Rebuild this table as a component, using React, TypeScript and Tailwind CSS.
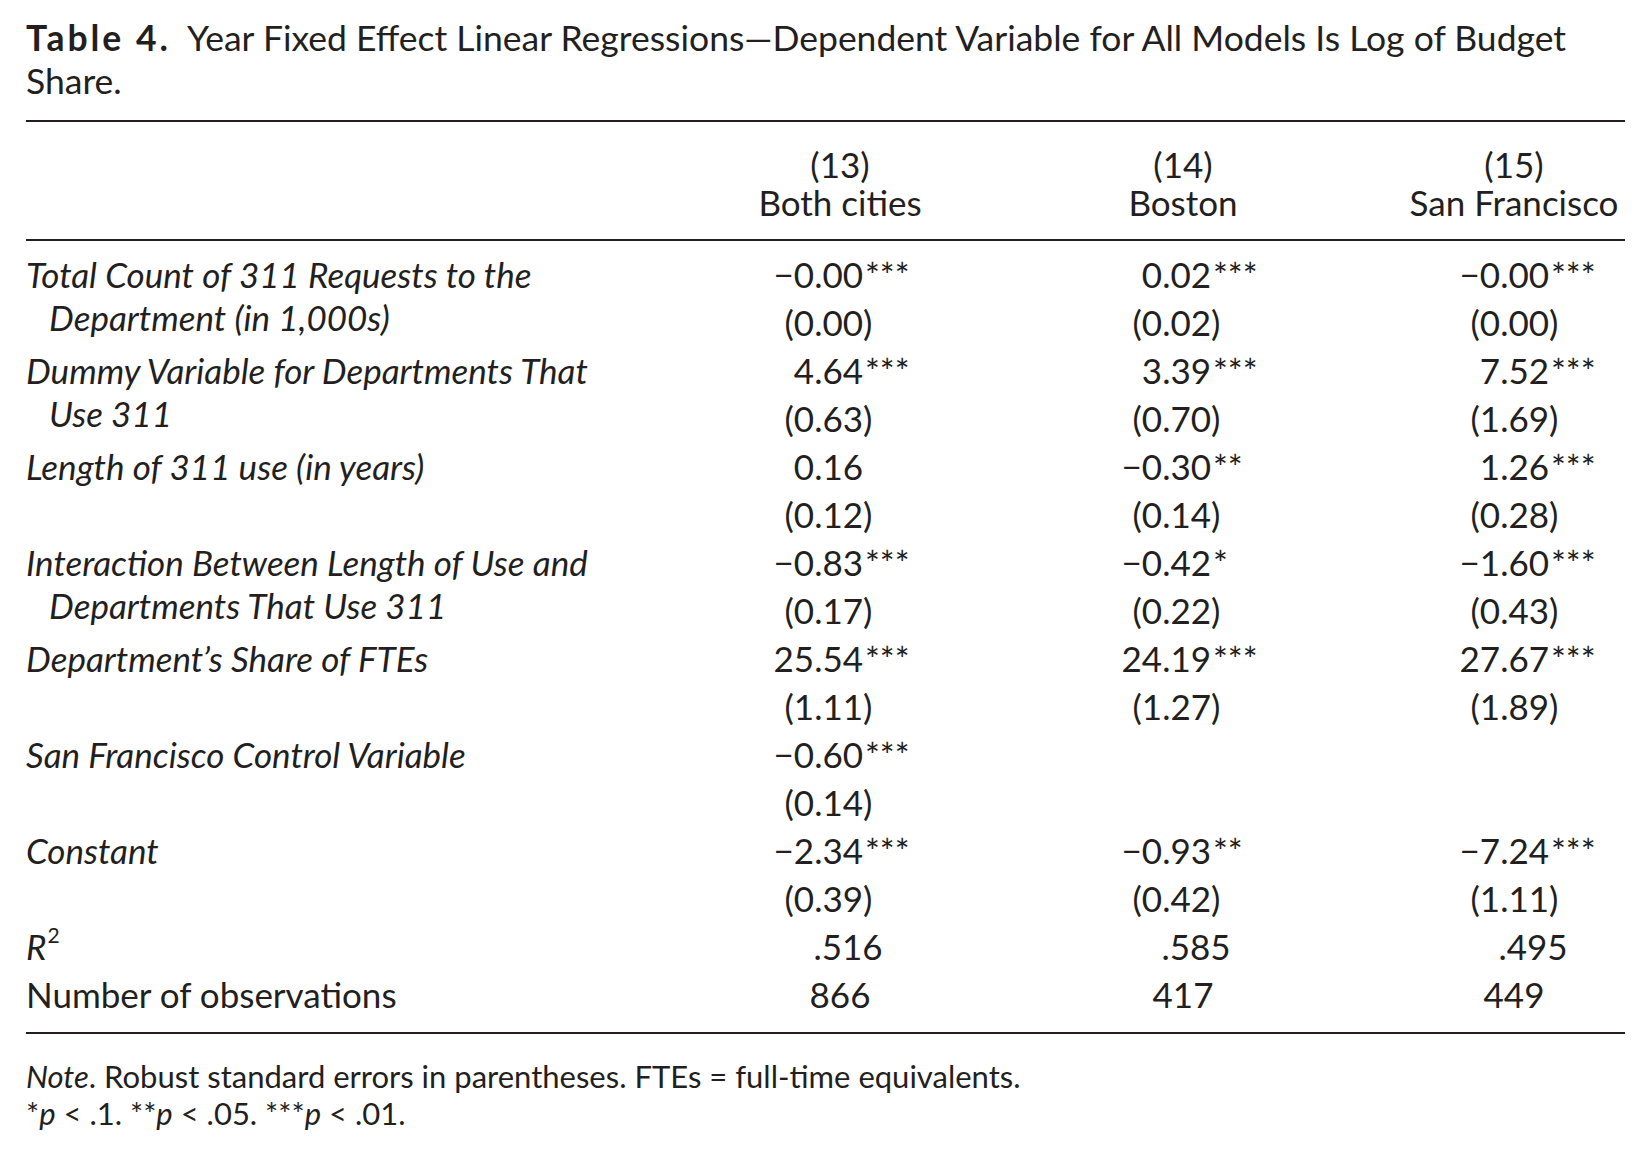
const rows = [
  {
    label: 'Total Count of 311 Requests to the Department (in 1,000s)',
    cells: [
      ['\u22120.00', '***', '0.00'],
      ['0.02', '***', '0.02'],
      ['\u22120.00', '***', '0.00'],
    ],
  },
  {
    label: 'Dummy Variable for Departments That Use 311',
    cells: [
      ['4.64', '***', '0.63'],
      ['3.39', '***', '0.70'],
      ['7.52', '***', '1.69'],
    ],
  },
  {
    label: 'Length of 311 use (in years)',
    cells: [
      ['0.16', '', '0.12'],
      ['\u22120.30', '**', '0.14'],
      ['1.26', '***', '0.28'],
    ],
  },
  {
    label: 'Interaction Between Length of Use and Departments That Use 311',
    cells: [
      ['\u22120.83', '***', '0.17'],
      ['\u22120.42', '*', '0.22'],
      ['\u22121.60', '***', '0.43'],
    ],
  },
  {
    label: 'Department\u2019s Share of FTEs',
    cells: [
      ['25.54', '***', '1.11'],
      ['24.19', '***', '1.27'],
      ['27.67', '***', '1.89'],
    ],
  },
  {
    label: 'San Francisco Control Variable',
    cells: [['\u22120.60', '***', '0.14'], null, null],
  },
  {
    label: 'Constant',
    cells: [
      ['\u22122.34', '***', '0.39'],
      ['\u22120.93', '**', '0.42'],
      ['\u22127.24', '***', '1.11'],
    ],
  },
];

// width of the part left of the decimal anchor, per column
const anchorW = ['w-[163px]', 'w-[231px]', 'w-[146px]'];

function ValueCell({ cell, col }: { cell: string[] | null; col: number }) {
  if (!cell) return <div />;
  const [coef, stars, se] = cell;
  return (
    <div className="leading-[48px]">
      <div className="flex">
        <span className={`${anchorW[col]} shrink-0 text-right`}>{coef}</span>
        <span className="whitespace-nowrap ml-[2px]">{stars}</span>
      </div>
      <div className="flex">
        <span className={`${anchorW[col]} shrink-0 text-right`}>({se}</span>
        <span>)</span>
      </div>
    </div>
  );
}

export default function App() {
  return (
    <div className="w-[1651px] h-[1160px] bg-white text-[#231f20] font-['Lato','Noto_Sans',sans-serif] text-[35px]">
      <div className="px-[26px] pt-[16px]">
        {/* Caption */}
        <h1 className="text-[35.5px] leading-[43px]">
          <span className="whitespace-nowrap">
            <span className="font-bold tracking-[3px]">Table 4.</span>
            <span className="ml-[16px]">
              Year Fixed Effect Linear Regressions&mdash;Dependent Variable for All Models Is Log of Budget
            </span>
          </span>
          <br />
          Share.
        </h1>

        {/* Column heads */}
        <div className="mt-[18px] border-t-2 border-b-2 border-[#231f20] pt-[23px] pb-[18px] grid grid-cols-[674px_280px_423px_222px] leading-[38px]">
          <div />
          <div className="text-center">
            <div>(13)</div>
            <div>Both cities</div>
          </div>
          <div className="text-center pr-[17px]">
            <div>(14)</div>
            <div>Boston</div>
          </div>
          <div className="text-center whitespace-nowrap">
            <div>(15)</div>
            <div>San Francisco</div>
          </div>
        </div>

        {/* Body */}
        <div className="border-b-2 border-[#231f20] pt-[9px] pb-[14px]">
          {rows.map((r) => (
            <div key={r.label} className="grid grid-cols-[674px_280px_423px_222px]">
              <div className="italic leading-[43px] pt-[3px] pl-[23px] -indent-[23px] pr-[70px]">
                {r.label}
              </div>
              {r.cells.map((c, i) => (
                <ValueCell key={i} cell={c} col={i} />
              ))}
            </div>
          ))}
          <div className="grid grid-cols-[674px_280px_423px_222px] leading-[48px]">
            <div className="italic">
              R<sup className="not-italic text-[21px] align-[7px] leading-none ml-[1px]">2</sup>
            </div>
            <div className="text-center pl-[16px]">.516</div>
            <div className="text-center pl-[9px]">.585</div>
            <div className="text-center pl-[38px]">.495</div>
          </div>
          <div className="grid grid-cols-[674px_280px_423px_222px] leading-[48px]">
            <div>Number of observations</div>
            <div className="text-center">866</div>
            <div className="text-center pr-[17px]">417</div>
            <div className="text-center">449</div>
          </div>
        </div>

        {/* Notes */}
        <div className="mt-[24px] text-[31px] leading-[37px]">
          <p>
            <span className="italic">Note</span>. Robust standard errors in parentheses. FTEs = full-time
            equivalents.
          </p>
          <p>
            *<span className="italic">p</span> &lt; .1. **<span className="italic">p</span> &lt; .05. ***
            <span className="italic">p</span> &lt; .01.
          </p>
        </div>
      </div>
    </div>
  );
}
